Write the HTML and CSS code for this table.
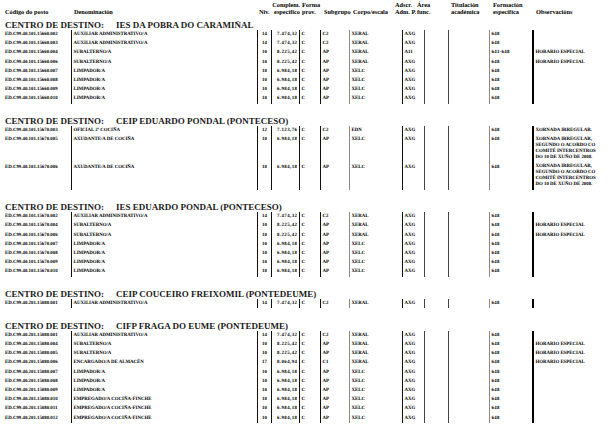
FILE: index.html
```html
<!DOCTYPE html>
<html lang="gl">
<head>
<meta charset="utf-8">
<title>Centros de destino</title>
<link rel="stylesheet" href="styles.css">
</head>
<body>
<div class="page">
  <div class="head">
    <div class="h">&nbsp;<br>Código do posto</div>
    <div class="h">&nbsp;<br>Denominación</div>
    <div class="h">&nbsp;<br>Niv.</div>
    <div class="h h-right">Complem.<br>específico</div>
    <div class="h">Forma<br>prov.</div>
    <div class="h">&nbsp;<br>Subgrupo</div>
    <div class="h">&nbsp;<br>Corpo/escala</div>
    <div class="h">Adscr.<br>Adm. P.</div>
    <div class="h h-area">Área<br>func.</div>
    <div class="h">Titulación<br>académica</div>
    <div class="h">Formación<br>específica</div>
    <div class="h">&nbsp;<br>Observacións</div>
  </div>

  <section class="section first">
    <div class="title"><span>CENTRO DE DESTINO:</span><span>IES DA POBRA DO CARAMIÑAL</span></div>
    <div class="row"><span>ED.C99.40.101.15660.002</span><span>AUXILIAR ADMINISTRATIVO/A</span><span>14</span><span>7.474,32</span><span>C</span><span>C2</span><span>XERAL</span><span>AXG</span><span></span><span></span><span>648</span><span></span></div>
    <div class="row"><span>ED.C99.40.101.15660.003</span><span>AUXILIAR ADMINISTRATIVO/A</span><span>14</span><span>7.474,32</span><span>C</span><span>C2</span><span>XERAL</span><span>AXG</span><span></span><span></span><span>648</span><span></span></div>
    <div class="row"><span>ED.C99.40.101.15660.004</span><span>SUBALTERNO/A</span><span>10</span><span>8.225,42</span><span>C</span><span>AP</span><span>XERAL</span><span>A11</span><span></span><span></span><span>641-648</span><span>HORARIO ESPECIAL</span></div>
    <div class="row"><span>ED.C99.40.101.15660.006</span><span>SUBALTERNO/A</span><span>10</span><span>8.225,42</span><span>C</span><span>AP</span><span>XERAL</span><span>AXG</span><span></span><span></span><span>648</span><span>HORARIO ESPECIAL</span></div>
    <div class="row"><span>ED.C99.40.101.15660.007</span><span>LIMPADOR/A</span><span>10</span><span>6.984,18</span><span>C</span><span>AP</span><span>XELC</span><span>AXG</span><span></span><span></span><span>648</span><span></span></div>
    <div class="row"><span>ED.C99.40.101.15660.008</span><span>LIMPADOR/A</span><span>10</span><span>6.984,18</span><span>C</span><span>AP</span><span>XELC</span><span>AXG</span><span></span><span></span><span>648</span><span></span></div>
    <div class="row"><span>ED.C99.40.101.15660.009</span><span>LIMPADOR/A</span><span>10</span><span>6.984,18</span><span>C</span><span>AP</span><span>XELC</span><span>AXG</span><span></span><span></span><span>648</span><span></span></div>
    <div class="row"><span>ED.C99.40.101.15660.010</span><span>LIMPADOR/A</span><span>10</span><span>6.984,18</span><span>C</span><span>AP</span><span>XELC</span><span>AXG</span><span></span><span></span><span>648</span><span></span></div>
  </section>

  <section class="section">
    <div class="title"><span>CENTRO DE DESTINO:</span><span>CEIP EDUARDO PONDAL (PONTECESO)</span></div>
    <div class="row"><span>ED.C99.40.101.15670.003</span><span>OFICIAL 2ª COCIÑA</span><span>12</span><span>7.123,76</span><span>C</span><span>C2</span><span>EDN</span><span>AXG</span><span></span><span></span><span>648</span><span>XORNADA IRREGULAR.</span></div>
    <div class="row"><span>ED.C99.40.101.15670.005</span><span>AXUDANTE/A DE COCIÑA</span><span>10</span><span>6.984,18</span><span>C</span><span>AP</span><span>XELC</span><span>AXG</span><span></span><span></span><span>648</span><span class="multi">XORNADA IRREGULAR,<br>SEGUNDO O ACORDO CO<br>COMITÉ INTERCENTROS<br>DO 10 DE XUÑO DE 2008.</span></div>
    <div class="row"><span>ED.C99.40.101.15670.006</span><span>AXUDANTE/A DE COCIÑA</span><span>10</span><span>6.984,18</span><span>C</span><span>AP</span><span>XELC</span><span>AXG</span><span></span><span></span><span>648</span><span class="multi">XORNADA IRREGULAR,<br>SEGUNDO O ACORDO CO<br>COMITÉ INTERCENTROS<br>DO 10 DE XUÑO DE 2008.</span></div>
  </section>

  <section class="section">
    <div class="title"><span>CENTRO DE DESTINO:</span><span>IES EDUARDO PONDAL (PONTECESO)</span></div>
    <div class="row"><span>ED.C99.40.101.15670.002</span><span>AUXILIAR ADMINISTRATIVO/A</span><span>14</span><span>7.474,32</span><span>C</span><span>C2</span><span>XERAL</span><span>AXG</span><span></span><span></span><span>648</span><span></span></div>
    <div class="row"><span>ED.C99.40.101.15670.004</span><span>SUBALTERNO/A</span><span>10</span><span>8.225,42</span><span>C</span><span>AP</span><span>XERAL</span><span>AXG</span><span></span><span></span><span>648</span><span>HORARIO ESPECIAL</span></div>
    <div class="row"><span>ED.C99.40.101.15670.006</span><span>SUBALTERNO/A</span><span>10</span><span>8.225,42</span><span>C</span><span>AP</span><span>XERAL</span><span>AXG</span><span></span><span></span><span>648</span><span>HORARIO ESPECIAL</span></div>
    <div class="row"><span>ED.C99.40.101.15670.007</span><span>LIMPADOR/A</span><span>10</span><span>6.984,18</span><span>C</span><span>AP</span><span>XELC</span><span>AXG</span><span></span><span></span><span>648</span><span></span></div>
    <div class="row"><span>ED.C99.40.101.15670.008</span><span>LIMPADOR/A</span><span>10</span><span>6.984,18</span><span>C</span><span>AP</span><span>XELC</span><span>AXG</span><span></span><span></span><span>648</span><span></span></div>
    <div class="row"><span>ED.C99.40.101.15670.009</span><span>LIMPADOR/A</span><span>10</span><span>6.984,18</span><span>C</span><span>AP</span><span>XELC</span><span>AXG</span><span></span><span></span><span>648</span><span></span></div>
    <div class="row"><span>ED.C99.40.101.15670.010</span><span>LIMPADOR/A</span><span>10</span><span>6.984,18</span><span>C</span><span>AP</span><span>XELC</span><span>AXG</span><span></span><span></span><span>648</span><span></span></div>
  </section>

  <section class="section">
    <div class="title"><span>CENTRO DE DESTINO:</span><span>CEIP COUCEIRO FREIXOMIL (PONTEDEUME)</span></div>
    <div class="row"><span>ED.C99.40.201.15080.001</span><span>AUXILIAR ADMINISTRATIVO/A</span><span>14</span><span>7.474,32</span><span>C</span><span>C2</span><span>XERAL</span><span>AXG</span><span></span><span></span><span>648</span><span></span></div>
  </section>

  <section class="section">
    <div class="title"><span>CENTRO DE DESTINO:</span><span>CIFP FRAGA DO EUME (PONTEDEUME)</span></div>
    <div class="row"><span>ED.C99.40.201.15080.001</span><span>AUXILIAR ADMINISTRATIVO/A</span><span>14</span><span>7.474,32</span><span>C</span><span>C2</span><span>XERAL</span><span>AXG</span><span></span><span></span><span>648</span><span></span></div>
    <div class="row"><span>ED.C99.40.201.15080.004</span><span>SUBALTERNO/A</span><span>10</span><span>8.225,42</span><span>C</span><span>AP</span><span>XERAL</span><span>AXG</span><span></span><span></span><span>648</span><span>HORARIO ESPECIAL</span></div>
    <div class="row"><span>ED.C99.40.201.15080.005</span><span>SUBALTERNO/A</span><span>10</span><span>8.225,42</span><span>C</span><span>AP</span><span>XERAL</span><span>AXG</span><span></span><span></span><span>648</span><span>HORARIO ESPECIAL</span></div>
    <div class="row"><span>ED.C99.40.201.15080.006</span><span>ENCARGADO/A DE ALMACÉN</span><span>17</span><span>8.064,94</span><span>C</span><span>C1</span><span>XERAL</span><span>AXG</span><span></span><span></span><span>648</span><span>HORARIO ESPECIAL</span></div>
    <div class="row"><span>ED.C99.40.201.15080.007</span><span>LIMPADOR/A</span><span>10</span><span>6.984,18</span><span>C</span><span>AP</span><span>XELC</span><span>AXG</span><span></span><span></span><span>648</span><span></span></div>
    <div class="row"><span>ED.C99.40.201.15080.008</span><span>LIMPADOR/A</span><span>10</span><span>6.984,18</span><span>C</span><span>AP</span><span>XELC</span><span>AXG</span><span></span><span></span><span>648</span><span></span></div>
    <div class="row"><span>ED.C99.40.201.15080.009</span><span>LIMPADOR/A</span><span>10</span><span>6.984,18</span><span>C</span><span>AP</span><span>XELC</span><span>AXG</span><span></span><span></span><span>648</span><span></span></div>
    <div class="row"><span>ED.C99.40.201.15080.010</span><span>EMPREGADO/A COCIÑA-FINCHE</span><span>10</span><span>6.984,18</span><span>C</span><span>AP</span><span>XELC</span><span>AXG</span><span></span><span></span><span>648</span><span></span></div>
    <div class="row"><span>ED.C99.40.201.15080.011</span><span>EMPREGADO/A COCIÑA-FINCHE</span><span>10</span><span>6.984,18</span><span>C</span><span>AP</span><span>XELC</span><span>AXG</span><span></span><span></span><span>648</span><span></span></div>
    <div class="row"><span>ED.C99.40.201.15080.012</span><span>EMPREGADO/A COCIÑA-FINCHE</span><span>10</span><span>6.984,18</span><span>C</span><span>AP</span><span>XELC</span><span>AXG</span><span></span><span></span><span>648</span><span></span></div>
  </section>
</div>
</body>
</html>
```

FILE: styles.css
```css
html, body {
  margin: 0;
  padding: 0;
  background: #ffffff;
}

body {
  font-family: "Liberation Serif", "Times New Roman", serif;
  font-weight: bold;
  color: #000000;
  width: 616px;
  height: 439px;
  overflow: hidden;
}

.page {
  padding-left: 4px;
  box-sizing: border-box;
  width: 616px;
}

/* header */
.head {
  display: grid;
  grid-template-columns: 69px 185px 12px 31px 22px 29px 42px 19px 37px 42px 43px 81px;
  padding-top: 0.5px;
  font-size: 6.3px;
  line-height: 7px;
  white-space: nowrap;
}

.h {
  padding-left: 1px;
}

.h-right {
  text-align: right;
  padding-right: 1px;
}

.h-area {
  padding-left: 4px;
}

/* sections */
.section {
  margin-top: 12.5px;
}

.section.first {
  margin-top: 5.5px;
}

.title {
  display: flex;
  gap: 12px;
  font-size: 9px;
  line-height: 10px;
  padding-left: 1px;
  white-space: nowrap;
  color: #1a1a1a;
}

.row {
  display: grid;
  grid-template-columns: 67px 186px 14px 28px 21px 29px 53px 22px 24px 41px 43px 84px;
  min-height: 9.2px;
  font-size: 4.85px;
  line-height: 9.2px;
  white-space: nowrap;
  text-rendering: geometricPrecision;
}

.row > span {
  display: block;
  box-sizing: border-box;
  padding-left: 1.5px;
}

.row > span:first-child {
  padding-left: 1px;
}

.row > span:nth-child(n+2) {
  border-left: 1px solid #111111;
}

.row > span:nth-child(3) {
  text-align: center;
  padding-left: 0;
}

.row > span:nth-child(4) {
  text-align: right;
  padding-right: 1.5px;
  letter-spacing: 0.45px;
}

.row > span:nth-child(11) {
  letter-spacing: 0.3px;
}

.row > span:nth-child(7),
.row > span:nth-child(11) {
  border-left-color: #8a8a8a;
}

.row > span:nth-child(9),
.row > span:nth-child(10) {
  border-left-color: #444444;
}

.row > span:nth-child(12) {
  border-left: 2px solid #000000;
}

.row > span.multi {
  line-height: 6px;
  padding-top: 1.6px;
  padding-bottom: 1.6px;
}
```
